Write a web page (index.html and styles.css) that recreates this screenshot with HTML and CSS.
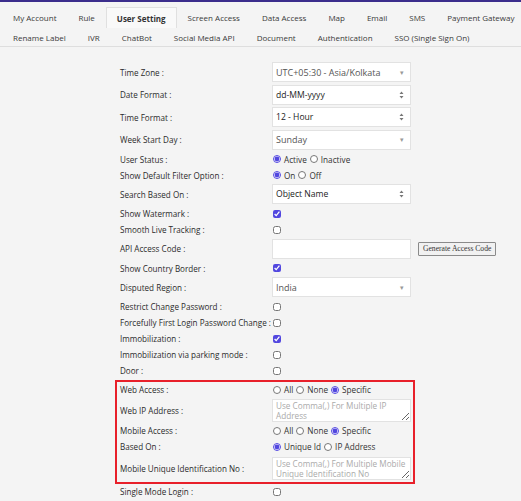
FILE: index.html
```html
<!DOCTYPE html>
<html lang="en">

<head>
    <meta charset="UTF-8">
    <meta name="viewport" content="width=device-width, initial-scale=1.0">
    <title>User Setting</title>
    <link rel="stylesheet" href="styles.css">
</head>

<body>
    <div class="Tabs">
        <div class="Tab_Row">
            <div class="tab">My Account</div>
            <div class="tab">Rule</div>
            <div class="tab active">User Setting</div>
            <div class="tab">Screen Access</div>
            <div class="tab">Data Access</div>
            <div class="tab">Map</div>
            <div class="tab">Email</div>
            <div class="tab">SMS</div>
            <div class="tab">Payment Gateway</div>
        </div>
        <div class="Tab_Row">
            <div class="tab">Rename Label</div>
            <div class="tab">IVR</div>
            <div class="tab">ChatBot</div>
            <div class="tab">Social Media API</div>
            <div class="tab">Document</div>
            <div class="tab">Authentication</div>
            <div class="tab">SSO (Single Sign On)</div>
        </div>
    </div>

    <div class="Settings">
        <div class="row sel">
            <label>Time Zone :</label>
            <div class="selectBox chosen"><span>UTC+05:30 - Asia/Kolkata</span><i class="caret">&#9662;</i></div>
        </div>
        <div class="row sel">
            <label>Date Format :</label>
            <div class="selectBox native"><span>dd-MM-yyyy</span>
                <svg class="updown" width="5" height="8" viewBox="0 0 5 8"><path d="M0.5 3 L2.5 0.5 L4.5 3 Z M0.5 5 L2.5 7.5 L4.5 5 Z" fill="#777"/></svg>
            </div>
        </div>
        <div class="row sel">
            <label>Time Format :</label>
            <div class="selectBox native"><span>12 - Hour</span>
                <svg class="updown" width="5" height="8" viewBox="0 0 5 8"><path d="M0.5 3 L2.5 0.5 L4.5 3 Z M0.5 5 L2.5 7.5 L4.5 5 Z" fill="#777"/></svg>
            </div>
        </div>
        <div class="row sel">
            <label>Week Start Day :</label>
            <div class="selectBox chosen"><span>Sunday</span><i class="caret">&#9662;</i></div>
        </div>
        <div class="row">
            <label>User Status :</label>
            <div class="opts">
                <input type="radio" name="status" checked><span>Active</span>
                <input type="radio" name="status"><span>Inactive</span>
            </div>
        </div>
        <div class="row">
            <label>Show Default Filter Option :</label>
            <div class="opts">
                <input type="radio" name="filter" checked><span>On</span>
                <input type="radio" name="filter"><span>Off</span>
            </div>
        </div>
        <div class="row sel">
            <label>Search Based On :</label>
            <div class="selectBox native"><span>Object Name</span>
                <svg class="updown" width="5" height="8" viewBox="0 0 5 8"><path d="M0.5 3 L2.5 0.5 L4.5 3 Z M0.5 5 L2.5 7.5 L4.5 5 Z" fill="#777"/></svg>
            </div>
        </div>
        <div class="row">
            <label>Show Watermark :</label>
            <div class="opts"><input type="checkbox" checked></div>
        </div>
        <div class="row">
            <label>Smooth Live Tracking :</label>
            <div class="opts"><input type="checkbox"></div>
        </div>
        <div class="row sel">
            <label>API Access Code :</label>
            <input class="textBox" type="text">
            <button class="genBtn">Generate Access Code</button>
        </div>
        <div class="row">
            <label>Show Country Border :</label>
            <div class="opts"><input type="checkbox" checked></div>
        </div>
        <div class="row sel">
            <label>Disputed Region :</label>
            <div class="selectBox chosen"><span>India</span><i class="caret">&#9662;</i></div>
        </div>
        <div class="row">
            <label>Restrict Change Password :</label>
            <div class="opts"><input type="checkbox"></div>
        </div>
        <div class="row">
            <label>Forcefully First Login Password Change :</label>
            <div class="opts"><input type="checkbox"></div>
        </div>
        <div class="row">
            <label>Immobilization :</label>
            <div class="opts"><input type="checkbox" checked></div>
        </div>
        <div class="row">
            <label>Immobilization via parking mode :</label>
            <div class="opts"><input type="checkbox"></div>
        </div>
        <div class="row">
            <label>Door :</label>
            <div class="opts"><input type="checkbox"></div>
        </div>

        <div class="Access_Box">
            <div class="row">
                <label>Web Access :</label>
                <div class="opts">
                    <input type="radio" name="web"><span>All</span>
                    <input type="radio" name="web"><span>None</span>
                    <input type="radio" name="web" checked><span>Specific</span>
                </div>
            </div>
            <div class="row area">
                <label>Web IP Address :</label>
                <textarea placeholder="Use Comma(,) For Multiple IP Address"></textarea>
            </div>
            <div class="row">
                <label>Mobile Access :</label>
                <div class="opts">
                    <input type="radio" name="mobile"><span>All</span>
                    <input type="radio" name="mobile"><span>None</span>
                    <input type="radio" name="mobile" checked><span>Specific</span>
                </div>
            </div>
            <div class="row">
                <label>Based On :</label>
                <div class="opts">
                    <input type="radio" name="based" checked><span>Unique Id</span>
                    <input type="radio" name="based"><span>IP Address</span>
                </div>
            </div>
            <div class="row area">
                <label>Mobile Unique Identification No :</label>
                <textarea placeholder="Use Comma(,) For Multiple Mobile Unique Identification No"></textarea>
            </div>
        </div>

        <div class="row">
            <label>Single Mode Login :</label>
            <div class="opts"><input type="checkbox"></div>
        </div>
    </div>
</body>

</html>
```

FILE: styles.css
```css
* {
    box-sizing: border-box;
    padding: 0;
    margin: 0px;
}

body {
    background-color: #f4f4f4;
    font-family: "Open Sans", Arial, sans-serif;
    color: #333;
    border-top: 2px solid #3b2d8c;
    overflow: hidden;
}

.Tabs {
    padding: 5px 0 0 2px;
    border-bottom: 1px solid #dedede;
    height: 45px;
}

.Tab_Row {
    display: flex;
}

.tab {
    font-size: 8px;
    color: #3a3a3a;
    padding: 0 11px;
    height: 19px;
    line-height: 19px;
    white-space: nowrap;
}

.Tab_Row:first-child .tab {
    height: 21px;
    line-height: 21px;
}

.tab.active {
    font-weight: 700;
    color: #333;
    background-color: #f9f9f9;
    border: 1px solid #e0e0e0;
    border-bottom: none;
    padding: 0 10px;
}

.Settings {
    margin-left: 115px;
    padding-top: 14px;
}

.row {
    display: grid;
    grid-template-columns: 152px 139px auto;
    align-items: center;
    height: 16px;
    padding-left: 5px;
}

.row.sel {
    height: 22.5px;
}

.row label {
    font-size: 8.1px;
    color: #2b2b2b;
    white-space: nowrap;
}

.selectBox {
    height: 20px;
    background-color: #fff;
    border: 1px solid #e2e2e2;
    display: flex;
    align-items: center;
    justify-content: space-between;
    padding: 0 6px 0 3px;
}

.selectBox.chosen span {
    font-size: 9px;
    color: #555;
}

.selectBox.native span {
    font-size: 8.6px;
    color: #222;
}

.caret {
    font-style: normal;
    font-size: 7px;
    color: #999;
}

.opts {
    display: flex;
    align-items: center;
    font-size: 8.2px;
    color: #333;
}

.opts input {
    width: 8px;
    height: 8px;
    margin: 0 3px 0 1px;
    accent-color: #5247df;
}

.opts span {
    margin-right: 2px;
}

.textBox {
    height: 20px;
    background-color: #fff;
    border: 1px solid #e2e2e2;
}

.genBtn {
    font-family: "Liberation Serif", "Times New Roman", serif;
    font-size: 7.6px;
    color: #333;
    background-color: #f1f1f1;
    border: 1px solid #8a8a8a;
    border-radius: 1px;
    height: 14px;
    padding: 0 4px;
    margin-left: 7px;
    justify-self: start;
    white-space: nowrap;
}

.Access_Box {
    width: 300px;
    border: 2px solid #e8202a;
    margin-top: 1px;
    padding-right: 2px;
}

.Access_Box .row {
    padding-left: 3px;
}

.row.area {
    height: 25px;
}

.Access_Box .row.area:last-child {
    height: 27px;
}

textarea {
    height: 23px;
    resize: vertical;
    border: 1px solid #e2e2e2;
    background-color: #fff;
    font-family: "Open Sans", Arial, sans-serif;
    font-size: 8.2px;
    line-height: 10px;
    padding: 1px 3px;
    overflow: hidden;
}

textarea::placeholder {
    color: #aaa;
}
```
